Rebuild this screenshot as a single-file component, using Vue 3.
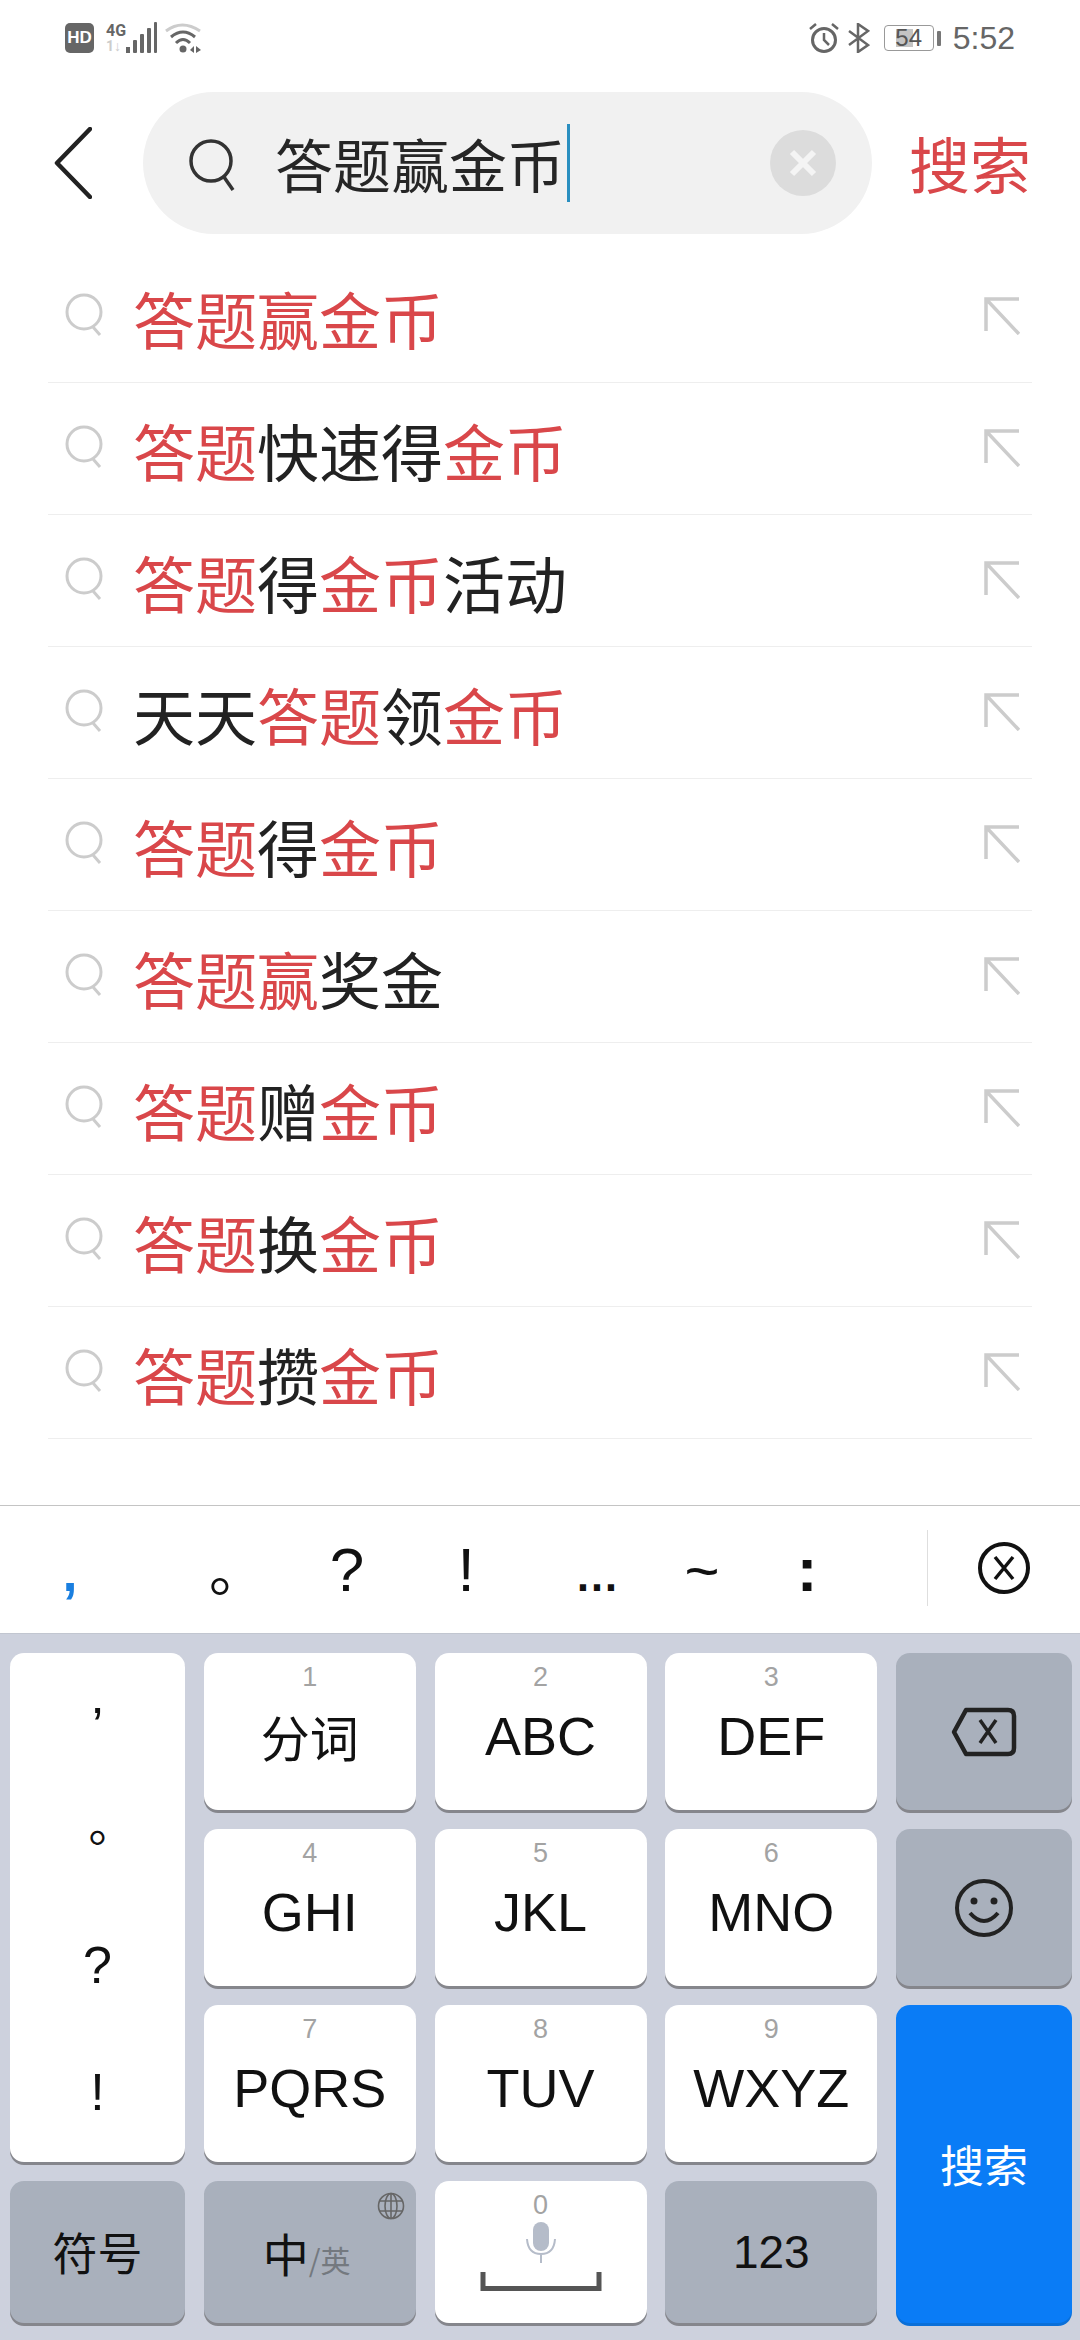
<script setup>
const R = true
const rows = [
  [['答题赢金币', R]],
  [['答题', R], ['快速得'], ['金币', R]],
  [['答题', R], ['得'], ['金币', R], ['活动']],
  [['天天'], ['答题', R], ['领'], ['金币', R]],
  [['答题', R], ['得'], ['金币', R]],
  [['答题赢', R], ['奖金']],
  [['答题', R], ['赠'], ['金币', R]],
  [['答题', R], ['换'], ['金币', R]],
  [['答题', R], ['攒'], ['金币', R]],
]
const candidates = [
  { t: ',', w: 134, c: 'blue' },
  { t: '。', w: 170, c: 'dot' },
  { t: '?', w: 86 },
  { t: '!', w: 152 },
  { t: '…', w: 110, c: 'ell' },
  { t: '~', w: 100, c: 'til' },
  { t: ':', w: 110, c: 'col' },
]
const keys = [
  { n: 1, l: '分词', c: 'cjk' }, { n: 2, l: 'ABC' }, { n: 3, l: 'DEF' },
  { n: 4, l: 'GHI' }, { n: 5, l: 'JKL' }, { n: 6, l: 'MNO' },
  { n: 7, l: 'PQRS' }, { n: 8, l: 'TUV' }, { n: 9, l: 'WXYZ' },
]
</script>

<template>
  <div class="page">
    <div class="status">
      <div class="st-left">
        <span class="hd">HD</span>
        <div class="net">
          <span class="g4">4G</span>
          <span class="g1">1↓</span>
        </div>
        <svg class="bars" width="32" height="32" viewBox="0 0 32 32" fill="#666">
          <rect x="1" y="25" width="4" height="6" />
          <rect x="8" y="18" width="4" height="13" rx="1" />
          <rect x="15" y="12" width="4" height="19" rx="1" />
          <rect x="22" y="6" width="4" height="25" rx="1" />
          <rect x="29" y="0" width="3" height="31" rx="1" />
        </svg>
        <svg class="wifi" width="38" height="32" viewBox="0 0 38 32" fill="none">
          <path d="M1 9 Q17 -3 35 9" stroke="#ccc" stroke-width="3" />
          <path d="M6 15 Q18 5 30 15" stroke="#666" stroke-width="3" />
          <path d="M11 21 Q18 14 25 21" stroke="#666" stroke-width="3" />
          <circle cx="18" cy="27" r="3.5" fill="#666" />
          <path d="M29 24 L25 28 L29 31 Z M31 24 L36 28 L31 31 Z" fill="#666" />
        </svg>
      </div>
      <div class="st-right">
        <svg width="32" height="32" viewBox="0 0 32 32" fill="none" stroke="#666" stroke-width="3">
          <circle cx="16" cy="18" r="11.5" />
          <path d="M16 11 V18 L21 23" stroke-width="2.5" />
          <path d="M2 7 L8 2 M30 7 L24 2" stroke-width="2.5" />
        </svg>
        <svg class="bt" width="22" height="30" viewBox="0 0 22 30" fill="none" stroke="#666" stroke-width="2.5">
          <path d="M1 8 L20 22 L10 29 V1 L20 8 L1 22" />
        </svg>
        <div class="batt">
          <div class="batt-body">
            <span class="batt-fill"></span>
            <span class="batt-num">54</span>
          </div>
          <span class="batt-tip"></span>
        </div>
        <span class="time">5:52</span>
      </div>
    </div>

    <div class="header">
      <svg class="back" width="38" height="72" viewBox="0 0 38 72" fill="none" stroke="#222" stroke-width="4.5" stroke-linecap="round" stroke-linejoin="round">
        <path d="M36 2 L3 36 L36 70" />
      </svg>
      <div class="pill">
        <svg class="p-search" width="46" height="52" viewBox="0 0 46 52" fill="none" stroke="#333" stroke-width="3.5">
          <circle cx="22" cy="22" r="20" />
          <path d="M35 38 L44 51" />
        </svg>
        <span class="p-text">答题赢金币</span>
        <span class="caret"></span>
        <svg class="p-clear" width="66" height="66" viewBox="0 0 66 66">
          <circle cx="33" cy="33" r="33" fill="#dcdcdc" />
          <path d="M22 22 L44 44 M44 22 L22 44" stroke="#f4f4f4" stroke-width="6" />
        </svg>
      </div>
      <span class="go">搜索</span>
    </div>

    <div class="list">
      <div v-for="(row, i) in rows" :key="i" class="row">
        <svg class="r-search" width="38" height="44" viewBox="0 0 38 44" fill="none" stroke="#ccc" stroke-width="3">
          <circle cx="19" cy="19" r="17" />
          <path d="M28 34 L35 42" />
        </svg>
        <span class="r-text"><span v-for="(s, j) in row" :key="j" :class="{ red: s[1] }">{{ s[0] }}</span></span>
        <svg class="r-arrow" width="36" height="38" viewBox="0 0 36 38" fill="none" stroke="#ccc" stroke-width="3.5">
          <path d="M35 2 H2 V34 M2 2 L35 37" />
        </svg>
      </div>
    </div>

    <div class="cand">
      <div class="cand-list">
        <span v-for="c in candidates" :key="c.t" class="c-cell" :class="c.c" :style="{ width: c.w + 'px' }">{{ c.t }}</span>
      </div>
      <div class="cand-close">
        <svg width="52" height="52" viewBox="0 0 52 52" fill="none" stroke="#111" stroke-width="4">
          <circle cx="26" cy="26" r="24" />
          <path d="M17 15 L35 37 M35 15 L17 37" stroke-width="3.5" />
        </svg>
      </div>
    </div>

    <div class="kb">
      <div class="key punct">
        <span class="p-q">’</span>
        <span class="p-dot">。</span>
        <span>?</span>
        <span>!</span>
      </div>
      <div v-for="k in keys" :key="k.n" class="key white">
        <span class="num">{{ k.n }}</span>
        <span class="lab" :class="k.c">{{ k.l }}</span>
      </div>
      <div class="key gray del">
        <svg width="66" height="50" viewBox="0 0 66 50" fill="none" stroke="#222" stroke-width="4.5" stroke-linejoin="round">
          <path d="M15 3 H57 Q63 3 63 9 V41 Q63 47 57 47 H15 L3 25 Z" />
          <path d="M29 13 L45 36 M45 13 L29 36" stroke-width="3.5" />
        </svg>
      </div>
      <div class="key gray emo">
        <svg width="60" height="60" viewBox="0 0 60 60" fill="none" stroke="#222" stroke-width="4">
          <circle cx="30" cy="30" r="27" />
          <circle cx="20" cy="23" r="3.5" fill="#222" stroke="none" />
          <circle cx="40" cy="23" r="3.5" fill="#222" stroke="none" />
          <path d="M16 35 Q30 51 44 35" />
        </svg>
      </div>
      <div class="key enter">搜索</div>
      <div class="key gray fu">符号</div>
      <div class="key gray zh">
        <svg class="globe" width="28" height="28" viewBox="0 0 28 28" fill="none" stroke="#666" stroke-width="1.6">
          <circle cx="14" cy="14" r="12.5" />
          <ellipse cx="14" cy="14" rx="6" ry="12.5" />
          <path d="M14 1.5 V26.5 M2 9 H26 M2 19 H26" />
        </svg>
        <span class="zh-a">中</span><span class="zh-b">/英</span>
      </div>
      <div class="key white sp">
        <span class="num">0</span>
        <svg class="mic" width="32" height="42" viewBox="0 0 32 42" fill="none" stroke="#b5bcc9" stroke-width="2">
          <rect x="8" y="1" width="16" height="29" rx="8" fill="#b5bcc9" stroke="none" />
          <path d="M2 18 Q3 33 16 33 Q29 33 30 18 M16 33 V42" />
        </svg>
        <svg class="bracket" width="122" height="20" viewBox="0 0 122 20" fill="none" stroke="#555" stroke-width="5">
          <path d="M3 0 V16.5 H119 V0" />
        </svg>
      </div>
      <div class="key gray n123">123</div>
    </div>
  </div>
</template>

<style>
html, body { margin: 0; background: #fff; }
</style>

<style scoped>
.page {
  width: 1080px;
  height: 2340px;
  display: flex;
  flex-direction: column;
  background: #fff;
  overflow: hidden;
  font-family: "Liberation Sans", "Noto Sans CJK SC", sans-serif;
}
.status {
  height: 76px;
  box-sizing: border-box;
  padding: 22px 65px 0 65px;
  display: flex;
  justify-content: space-between;
  align-items: flex-start;
}
.st-left, .st-right { display: flex; align-items: center; height: 32px; }
.hd {
  width: 29px; height: 30px;
  border-radius: 5px;
  background: #666;
  color: #fff;
  font: bold 17px/30px "Liberation Sans", sans-serif;
  text-align: center;
}
.net {
  display: flex; flex-direction: column;
  width: 19px; margin-left: 12px;
}
.g4 { font: bold 16px/16px "Roboto", sans-serif; color: #666; }
.g1 { font: bold 14px/15px "Roboto", sans-serif; color: #ccc; }
.bars { margin-left: 0; }
.wifi { margin-left: 8px; }
.bt { margin-left: 8px; }
.batt { display: flex; align-items: center; margin-left: 14px; }
.batt-body {
  width: 50px; height: 26px;
  box-sizing: border-box;
  border: 1.5px solid #999;
  border-radius: 4px;
  position: relative;
  display: flex; align-items: center; justify-content: center;
}
.batt-fill {
  position: absolute; left: 11px; top: 3px; bottom: 3px; width: 17px;
  background: #c4c4c4;
}
.batt-num { position: relative; font-size: 24px; color: #555; }
.batt-tip { width: 4px; height: 15px; margin-left: 3px; background: #777; border-radius: 1px; }
.time { margin-left: 12px; font-size: 32px; color: #666; line-height: 32px; }

.header {
  box-sizing: border-box;
  height: 175px;
  padding: 16px 50px 17px 54px;
  display: flex;
  align-items: center;
}
.back { flex: none; margin-right: 51px; }
.pill {
  width: 729px; height: 142px; flex: none;
  border-radius: 71px;
  background: #f1f1f1;
  display: flex; align-items: center;
  padding: 0 36px 0 46px;
  box-sizing: border-box;
}
.p-search { flex: none; margin-top: 3px; }
.p-text {
  margin-left: 40px;
  font-size: 58px; line-height: 70px; color: #262626;
  font-family: "Noto Sans CJK SC", sans-serif;
}
.caret { width: 2.5px; height: 78px; margin-left: 2px; background: #2a8fc0; flex: none; }
.p-clear { margin-left: auto; flex: none; }
.go {
  margin-left: 37px;
  font-size: 61px; line-height: 70px; color: #d9474a;
  font-family: "Noto Sans CJK SC", sans-serif;
  white-space: nowrap;
}

.list { padding: 0 48px; }
.row {
  height: 132px;
  box-sizing: border-box;
  border-bottom: 1.5px solid #eeeeee;
  display: flex; align-items: center;
  padding-left: 17px;
}
.r-search { flex: none; margin-top: -4px; }
.r-text {
  margin-left: 30px;
  padding-top: 3px;
  font: 62px/80px "Noto Sans CJK SC", sans-serif;
  color: #222;
  white-space: nowrap;
}
.red { color: #d9474a; }
.r-arrow { flex: none; margin-left: auto; margin-right: 12px; margin-top: -2px; }

.cand {
  margin-top: auto;
  height: 129px;
  box-sizing: border-box;
  border-top: 1.5px solid #c4c4c4;
  border-bottom: 1.5px solid #c2c6d0;
  display: flex;
  align-items: center;
}
.cand-list {
  width: 927px;
  height: 100%;
  box-sizing: border-box;
  padding-top: 25px;
  display: flex;
  align-items: baseline;
  flex: none;
}
.c-cell {
  text-align: center;
  font-size: 62px;
  line-height: 72px;
  color: #111;
  flex: none;
}
.c-cell.blue { color: #1a7fe0; font-weight: bold; font-size: 54px; padding-left: 6px; box-sizing: border-box; }
.c-cell.dot { font-family: "Noto Sans CJK SC", sans-serif; font-size: 56px; padding-left: 36px; box-sizing: border-box; }
.c-cell.ell { font-size: 44px; font-weight: bold; }
.c-cell.til { font-size: 60px; }
.c-cell.col { font-size: 62px; font-weight: bold; }
.cand-close {
  flex: 1;
  height: 76px;
  border-left: 1px solid #dedede;
  display: flex; align-items: center; justify-content: center;
  margin-top: -4px;
}

.kb {
  flex: none;
  height: 706px;
  box-sizing: border-box;
  background: #cdd1dd;
  padding: 19px 8px 0 10px;
  display: grid;
  grid-template-columns: 175px 212px 212px 212px 176px;
  grid-template-rows: 157px 157px 157px 142px;
  column-gap: 18.75px;
  row-gap: 19px;
}
.key {
  border-radius: 14px;
  box-shadow: 0 3px 0 #85868c;
  display: flex; flex-direction: column; align-items: center;
  color: #111;
  box-sizing: border-box;
}
.white { background: #fff; padding-top: 9px; }
.gray { background: #a9b0bc; }
.num { font-size: 27px; line-height: 30px; color: #a3a3a3; }
.lab { margin-top: 14px; font-size: 54px; line-height: 60px; white-space: nowrap; }
.lab.cjk { font: 49px/60px "Noto Sans CJK SC", sans-serif; }
.punct {
  grid-column: 1; grid-row: 1 / span 3;
  background: #fff;
  display: grid;
  grid-template-rows: 121px 127px 127px 127px;
  justify-items: center; align-items: center;
  font-size: 52px;
}
.p-q { padding-top: 24px; }
.p-dot {
  font-family: "Noto Sans CJK SC", sans-serif;
  font-size: 46px;
  padding: 0 0 34px 28px;
}
.del { grid-column: 5; grid-row: 1; justify-content: center; }
.emo { grid-column: 5; grid-row: 2; justify-content: center; }
.enter {
  grid-column: 5; grid-row: 3 / span 2;
  background: #0a7cf6;
  color: #fff;
  justify-content: center;
  font: 44px/60px "Noto Sans CJK SC", sans-serif;
  box-shadow: 0 3px 0 #0a6fd8;
}
.fu {
  grid-column: 1; grid-row: 4;
  justify-content: center;
  font: 45px/60px "Noto Sans CJK SC", sans-serif;
}
.zh {
  grid-column: 2; grid-row: 4;
  position: relative;
  flex-direction: row; justify-content: center; align-items: baseline;
  padding-top: 41px;
  padding-right: 6px;
  font-family: "Noto Sans CJK SC", sans-serif;
}
.globe { position: absolute; top: 11px; right: 11px; }
.zh-a { font-size: 46px; line-height: 60px; }
.zh-b { font-size: 30px; line-height: 60px; color: #74797f; }
.sp { grid-column: 3; grid-row: 4; }
.mic { margin-top: 1px; }
.bracket { margin-top: 9px; }
.n123 { grid-column: 4; grid-row: 4; justify-content: center; font-size: 46px; }
</style>
